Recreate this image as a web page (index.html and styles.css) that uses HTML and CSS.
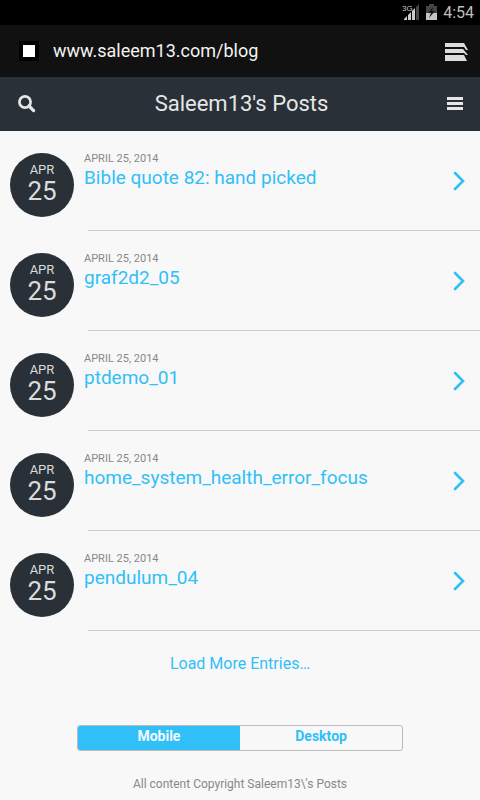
FILE: index.html
```html
<!DOCTYPE html>
<html lang="en">
<head>
<meta charset="utf-8">
<meta name="viewport" content="width=device-width, initial-scale=1">
<title>Saleem13's Posts</title>
<link rel="stylesheet" href="styles.css">
</head>
<body>
<div class="status">
  <svg class="signal" width="18" height="17" viewBox="0 0 18 17" aria-hidden="true">
    <text class="network" x="0" y="8">3G</text>
    <path fill="#ccc" d="M2 17v-1l3-3v4zM6 17v-5l3-3v8zM10 17V8l3-3v12z"/>
    <path fill="#484848" d="M14 17V4l3-3v16z"/>
  </svg>
  <svg class="battery" width="11" height="16" viewBox="0 0 11 16" aria-hidden="true">
    <path fill="#444" d="M3 0h5v2h3v7H0V2h3z"/>
    <path fill="#c4c4c4" d="M0 9h11v7H0z"/>
    <path fill="#111" d="M7 3L2 9h3l-2 5 6-7H6z"/>
  </svg>
  <span class="clock">4:54</span>
</div>
<div class="browser">
  <span class="favicon"></span>
  <input class="url" type="text" aria-label="Address" value="www.saleem13.com/blog">
  <button class="icon-button" type="button" aria-label="Tabs">
    <svg width="24" height="19" viewBox="0 0 24 19" aria-hidden="true">
      <path fill="#ddd" d="M1 1h19l4 7h-2l-2-3H1zM1 7h18l5 6h-2l-2-2H1zM1 13h19l3 6H1z"/>
    </svg>
  </button>
</div>
<header class="header">
  <button class="icon-button" type="button" aria-label="Search">
    <svg width="18" height="18" viewBox="0 0 18 18" fill="none" stroke="#e6e6e6" aria-hidden="true">
      <circle cx="7" cy="7" r="5.6" stroke-width="2.7"/>
      <path d="M11 11l4.6 4.6" stroke-width="3.2" stroke-linecap="round"/>
    </svg>
  </button>
  <h1 class="title">Saleem13's Posts</h1>
  <button class="icon-button" type="button" aria-label="Menu">
    <svg width="16" height="14" viewBox="0 0 16 14" aria-hidden="true">
      <path fill="#e6e6e6" d="M0 0h16v3H0zM0 5h16v3H0zM0 10h16v3H0z"/>
    </svg>
  </button>
</header>
<main>
  <article class="post">
    <div class="badge"><span class="month">APR</span><span class="day">25</span></div>
    <a class="entry" href="#p1">
      <span class="text"><span class="date">APRIL 25, 2014</span><span class="name">Bible quote 82: hand picked</span></span>
      <svg class="arrow" width="13" height="20" viewBox="0 0 13 20" aria-hidden="true"><path d="M3 2l8 8-8 8"/></svg>
    </a>
  </article>
  <article class="post">
    <div class="badge"><span class="month">APR</span><span class="day">25</span></div>
    <a class="entry" href="#p2">
      <span class="text"><span class="date">APRIL 25, 2014</span><span class="name">graf2d2_05</span></span>
      <svg class="arrow" width="13" height="20" viewBox="0 0 13 20" aria-hidden="true"><path d="M3 2l8 8-8 8"/></svg>
    </a>
  </article>
  <article class="post">
    <div class="badge"><span class="month">APR</span><span class="day">25</span></div>
    <a class="entry" href="#p3">
      <span class="text"><span class="date">APRIL 25, 2014</span><span class="name">ptdemo_01</span></span>
      <svg class="arrow" width="13" height="20" viewBox="0 0 13 20" aria-hidden="true"><path d="M3 2l8 8-8 8"/></svg>
    </a>
  </article>
  <article class="post">
    <div class="badge"><span class="month">APR</span><span class="day">25</span></div>
    <a class="entry" href="#p4">
      <span class="text"><span class="date">APRIL 25, 2014</span><span class="name">home_system_health_error_focus</span></span>
      <svg class="arrow" width="13" height="20" viewBox="0 0 13 20" aria-hidden="true"><path d="M3 2l8 8-8 8"/></svg>
    </a>
  </article>
  <article class="post">
    <div class="badge"><span class="month">APR</span><span class="day">25</span></div>
    <a class="entry" href="#p5">
      <span class="text"><span class="date">APRIL 25, 2014</span><span class="name">pendulum_04</span></span>
      <svg class="arrow" width="13" height="20" viewBox="0 0 13 20" aria-hidden="true"><path d="M3 2l8 8-8 8"/></svg>
    </a>
  </article>
  <a class="more" href="#more">Load More Entries…</a>
</main>
<footer class="footer">
  <div class="switch">
    <button class="option active" type="button">Mobile</button>
    <button class="option" type="button">Desktop</button>
  </div>
  <p class="copyright">All content Copyright Saleem13\'s Posts</p>
</footer>
</body>
</html>
```
FILE: styles.css
```css
* {
  box-sizing: border-box;
}

body {
  margin: 0;
  background: #f8f8f8;
  font-family: Roboto, "Liberation Sans", sans-serif;
}

button {
  margin: 0;
  padding: 0;
  border: 0;
  background: none;
  font: inherit;
}

svg {
  display: block;
}

.status {
  display: flex;
  align-items: center;
  justify-content: flex-end;
  gap: 6px;
  height: 25px;
  padding-right: 6px;
  background: #000;
}

.signal {
  margin-top: -2px;
  overflow: visible;
}

.battery {
  margin-top: -2px;
}

.network {
  fill: #ccc;
  font-family: "Liberation Sans", sans-serif;
  font-size: 8px;
}

.clock {
  color: #bebebe;
  font-size: 16px;
  line-height: 25px;
}

.browser {
  display: flex;
  align-items: center;
  height: 52px;
  padding: 0 12px 0 19px;
  background: #111;
}

.favicon {
  width: 20px;
  height: 20px;
  border: 4px solid #000;
  background: #fff;
}

.url {
  flex: 1;
  min-width: 0;
  margin: 0 14px;
  padding: 0;
  border: 0;
  outline: 0;
  background: none;
  color: #f3f3f3;
  font: 18px/24px Roboto, "Liberation Sans", sans-serif;
}

.header {
  display: flex;
  align-items: center;
  height: 54px;
  padding: 0 17px 0 18px;
  background: #293038;
}

.title {
  flex: 1;
  margin: 0;
  color: #e6e6e6;
  font-size: 22px;
  font-weight: 400;
  line-height: 32px;
  text-align: center;
}

.post {
  display: flex;
  height: 100px;
  padding-left: 10px;
}

.badge {
  display: flex;
  flex: none;
  flex-direction: column;
  align-items: center;
  width: 64px;
  height: 64px;
  margin-top: 22px;
  padding-top: 9px;
  border-radius: 50%;
  background: #293038;
  color: #dcdcdc;
}

.month {
  font-size: 13px;
  line-height: 16px;
}

.day {
  font-size: 26px;
  line-height: 26px;
}

.entry {
  display: flex;
  flex: 1;
  justify-content: space-between;
  min-width: 0;
  margin-left: 14px;
  padding-right: 15px;
  border-bottom: 1px solid #ccc;
  color: #31bff8;
  text-decoration: none;
}

.text {
  display: flex;
  flex-direction: column;
  margin: 20px 0 0 -4px;
}

.date {
  color: #888;
  font-size: 11px;
  line-height: 16px;
}

.name {
  font-size: 19px;
  line-height: 22px;
}

.arrow {
  flex: none;
  margin-top: 40px;
  fill: none;
  stroke: #31bff8;
  stroke-width: 2.6;
  stroke-linecap: round;
}

.more {
  display: block;
  padding-top: 21px;
  color: #31bff8;
  font-size: 16px;
  line-height: 24px;
  text-align: center;
  text-decoration: none;
}

.footer {
  padding: 49px 16% 7px;
}

.switch {
  display: flex;
  height: 26px;
  overflow: hidden;
  border: 1px solid #bbb;
  border-radius: 3px;
}

.option {
  flex: 1;
  padding-bottom: 4px;
  color: #31bff8;
  font-size: 14px;
  font-weight: 700;
  line-height: 20px;
}

.active {
  background: #31bff8;
  color: #f3faff;
}

.copyright {
  margin: 24px 0 0;
  color: #888;
  font-size: 12px;
  line-height: 18px;
  text-align: center;
}
```
